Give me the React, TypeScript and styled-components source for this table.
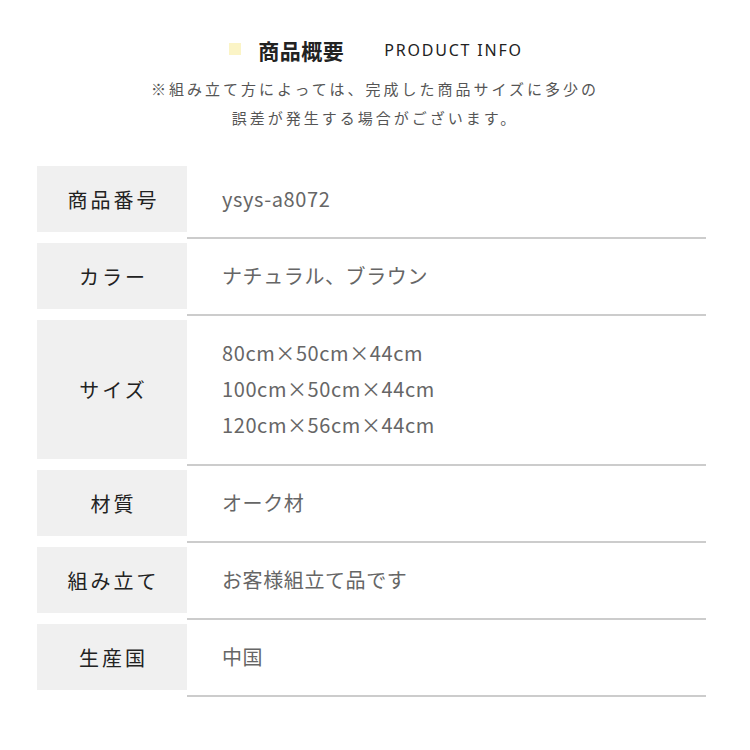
import styled, { createGlobalStyle } from 'styled-components'

const GlobalStyle = createGlobalStyle`
	body {
		margin: 0;
		background: #fff;
		font-family: 'Noto Sans CJK JP', 'Noto Sans', sans-serif;
	}
`

type Spec = {
	label: string
	values: string[]
}

const specs: Spec[] = [
	{ label: '商品番号', values: ['ysys-a8072'] },
	{ label: 'カラー', values: ['ナチュラル、ブラウン'] },
	{
		label: 'サイズ',
		values: ['80cm×50cm×44cm', '100cm×50cm×44cm', '120cm×56cm×44cm'],
	},
	{ label: '材質', values: ['オーク材'] },
	{ label: '組み立て', values: ['お客様組立て品です'] },
	{ label: '生産国', values: ['中国'] },
]

export default function App() {
	return (
		<Page>
			<GlobalStyle />
			<Header>
				<TitleRow>
					<Marker />
					<Title>商品概要</Title>
					<SubTitle>PRODUCT INFO</SubTitle>
				</TitleRow>
				<Note>
					※組み立て方によっては、完成した商品サイズに多少の
					<br />
					誤差が発生する場合がございます。
				</Note>
			</Header>
			<Table>
				{specs.map((spec) => (
					<Row key={spec.label}>
						<Label>{spec.label}</Label>
						<Value $multi={spec.values.length > 1}>
							{spec.values.map((v) => (
								<Line key={v}>{v}</Line>
							))}
						</Value>
					</Row>
				))}
			</Table>
		</Page>
	)
}

const Page = styled.div`
	width: 750px;
	height: 750px;
	padding-top: 33px;
	box-sizing: border-box;
	background: #fff;
`

const Header = styled.header`
	display: flex;
	flex-direction: column;
	align-items: center;
`

const TitleRow = styled.div`
	display: flex;
	align-items: center;
	height: 34px;
	padding-left: 2px;
`

const Marker = styled.span`
	width: 12px;
	height: 12px;
	background: #fbf4c6;
	margin-right: 17px;
	margin-top: -2px;
`

const Title = styled.h1`
	margin: 0;
	font-size: 21px;
	font-weight: 700;
	letter-spacing: 0.5px;
	color: #222;
`

const SubTitle = styled.span`
	margin-left: 40px;
	font-family: 'Noto Sans', sans-serif;
	font-size: 16px;
	letter-spacing: 1.8px;
	color: #222;
`

const Note = styled.p`
	margin: 7px 0 0;
	font-size: 15px;
	line-height: 29px;
	letter-spacing: 3px;
	color: #555;
	text-align: center;
`

const Table = styled.div`
	display: flex;
	flex-direction: column;
	gap: 4px;
	width: 669px;
	margin: 34px 0 0 37px;
`

const Row = styled.div`
	display: grid;
	grid-template-columns: 150px 1fr;
`

const Label = styled.div`
	display: flex;
	align-items: center;
	justify-content: center;
	margin-bottom: 7px;
	background: #f0f0f0;
	font-size: 20px;
	letter-spacing: 3px;
	padding-left: 3px;
	color: #222;
`

const Value = styled.div<{ $multi: boolean }>`
	display: flex;
	flex-direction: column;
	justify-content: center;
	box-sizing: border-box;
	min-height: 73px;
	padding: ${(p) => (p.$multi ? '15px 0 21px 35px' : '0 0 6px 35px')};
	border-bottom: 2px solid #cccccc;
	font-size: 20px;
	color: #666;
`

const Line = styled.div`
	line-height: 36px;
	letter-spacing: 0.6px;
`
